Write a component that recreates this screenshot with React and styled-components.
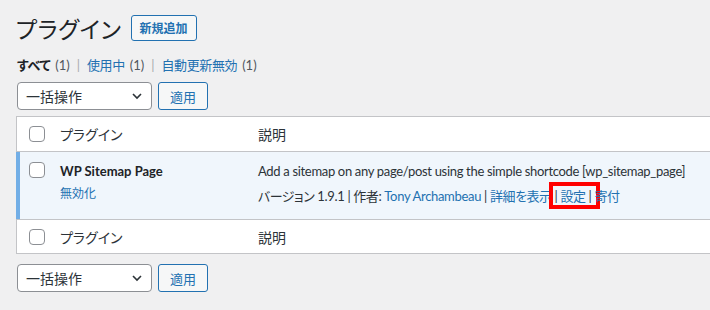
import React from "react";
import styled, { createGlobalStyle } from "styled-components";

const Global = createGlobalStyle`
  html, body { margin: 0; padding: 0; background: #f0f0f1; overflow: hidden; }
  body {
    font-family: Lato, "Noto Sans CJK JP", sans-serif;
    font-size: 13px;
    color: #1d2327;
    width: 710px;
    height: 310px;
    font-feature-settings: "palt";
  }
`;

const Wrap = styled.div`
  padding: 8px 0 0 16px;
  width: 740px;
`;

const TitleBar = styled.div`
  display: flex;
  align-items: center;
  gap: 9px;
`;

const Title = styled.h1`
  margin: 0;
  font-size: 23px;
  font-weight: 400;
  line-height: 40px;
  font-family: "Noto Sans CJK JP", sans-serif;
  letter-spacing: 0.6px;
`;

const OutlineButton = styled.button`
  font-family: "Noto Sans CJK JP", sans-serif;
  font-size: ${(p) => p.$fs || 13}px;
  font-weight: ${(p) => (p.$bold ? 600 : 400)};
  color: #2271b1;
  background: #f6f7f7;
  border: 1px solid #2271b1;
  border-radius: 3px;
  height: ${(p) => p.$h || 28}px;
  padding: 0 ${(p) => p.$px || 10}px;
  line-height: 1;
  display: inline-flex;
  align-items: center;
`;

const Filters = styled.ul`
  list-style: none;
  margin: 7px 0 0 1px;
  padding: 0;
  display: flex;
  align-items: center;
  font-family: Lato, "Noto Sans CJK JP", sans-serif;
  font-size: 13px;
  line-height: 20px;
  color: #50575e;
`;

const FilterItem = styled.li`
  display: inline-flex;
  align-items: center;
  color: ${(p) => (p.$current ? "#1d2327" : "#2271b1")};
  font-weight: ${(p) => (p.$current ? 700 : 400)};
  letter-spacing: -0.4px;
`;

const Count = styled.span`
  color: #50575e;
  font-weight: 400;
  margin-left: 5px;
  font-size: 13px;
  letter-spacing: 0;
`;

const Sep = styled.span`
  color: #a7aaad;
  margin: 0 7px;
  font-weight: 400;
`;

const Actions = styled.div`
  display: flex;
  gap: 6px;
  margin: ${(p) => p.$m || "0"};
  padding-left: 1px;
`;

const Select = styled.div`
  width: 135px;
  height: 28px;
  box-sizing: border-box;
  border: 1px solid #8c8f94;
  border-radius: 4px;
  background: #fff;
  display: flex;
  align-items: center;
  justify-content: space-between;
  padding: 0 8px 0 8px;
  font-family: "Noto Sans CJK JP", sans-serif;
  font-size: 14px;
  color: #2c3338;
`;

const Table = styled.div`
  margin-top: 6px;
  background: #fff;
  border: 1px solid #c3c4c7;
`;

const Row = styled.div`
  display: grid;
  grid-template-columns: 43px 198px 1fr;
  align-items: ${(p) => (p.$head ? "center" : "start")};
  min-height: ${(p) => p.$h}px;
  box-sizing: border-box;
  border-top: ${(p) => (p.$first ? "none" : "1px solid #c3c4c7")};
  background: ${(p) => (p.$active ? "#f0f6fc" : "#fff")};
  box-shadow: ${(p) => (p.$active ? "inset 4px 0 0 #72aee6" : "none")};
  margin-left: ${(p) => (p.$active ? "-1px" : "0")};
  padding-left: ${(p) => (p.$active ? "1px" : "0")};
`;

const Check = styled.span`
  display: block;
  width: 16px;
  height: 16px;
  box-sizing: border-box;
  border: 1px solid #8c8f94;
  border-radius: 4px;
  background: #fff;
  margin-left: 12px;
  margin-top: ${(p) => p.$mt || 0}px;
`;

const HeadCell = styled.div`
  font-family: "Noto Sans CJK JP", sans-serif;
  font-size: 14px;
  color: #2c3338;
`;

const NameCell = styled.div`
  padding-top: 9px;
  display: flex;
  flex-direction: column;
  gap: 3px;
`;

const PluginName = styled.strong`
  font-family: Lato, "Noto Sans CJK JP", sans-serif;
  font-size: 13px;
  font-weight: 700;
  line-height: 20px;
`;

const Link = styled.a`
  color: #2271b1;
  text-decoration: none;
  position: relative;
`;

const SmallLink = styled(Link)`
  font-family: "Noto Sans CJK JP", sans-serif;
  font-size: 12px;
  line-height: 18px;
`;

const DescCell = styled.div`
  padding-top: 9px;
  display: flex;
  flex-direction: column;
  gap: 5px;
  font-family: Lato, "Noto Sans CJK JP", sans-serif;
  font-size: 13px;
  line-height: 20px;
  color: #2c3338;
  letter-spacing: -0.32px;
`;

const Meta = styled.div`
  white-space: nowrap;
`;

const Ja = styled.span`
  letter-spacing: -0.5px;
`;

const Marked = styled.span`
  position: relative;
  &::after {
    content: "";
    position: absolute;
    left: -12px;
    right: -14px;
    top: -6px;
    bottom: -5px;
    border: 4px solid #ff0000;
  }
`;

const Chevron = () => (
  <svg width="12" height="12" viewBox="0 0 12 12">
    <path d="M2 4 L6 8 L10 4" fill="none" stroke="#2c3338" strokeWidth="1.6" />
  </svg>
);

const BulkActions = ({ m }) => (
  <Actions $m={m}>
    <Select>
      一括操作
      <Chevron />
    </Select>
    <OutlineButton $px={11}>適用</OutlineButton>
  </Actions>
);

export default function App() {
  return (
    <>
      <Global />
      <Wrap>
        <TitleBar>
          <Title>プラグイン</Title>
          <OutlineButton $bold $h={26} $px={8} $fs={12}>新規追加</OutlineButton>
        </TitleBar>
        <Filters>
          <FilterItem $current>
            すべて<Count>(1)</Count>
          </FilterItem>
          <Sep>|</Sep>
          <FilterItem>
            使用中<Count>(1)</Count>
          </FilterItem>
          <Sep>|</Sep>
          <FilterItem>
            自動更新無効<Count>(1)</Count>
          </FilterItem>
        </Filters>
        <BulkActions m="7px 0 0 0" />
        <Table>
          <Row $head $first $h={34}>
            <Check />
            <HeadCell>プラグイン</HeadCell>
            <HeadCell>説明</HeadCell>
          </Row>
          <Row $active $h={68}>
            <Check $mt={10} />
            <NameCell>
              <PluginName>WP Sitemap Page</PluginName>
              <SmallLink>無効化</SmallLink>
            </NameCell>
            <DescCell>
              <div>Add a sitemap on any page/post using the simple shortcode [wp_sitemap_page]</div>
              <Meta>
                <Ja>バージョン</Ja> 1.9.1 | <Ja>作者</Ja>: <Link>Tony Archambeau</Link> |{" "}
                <Link><Ja>詳細を表示</Ja></Link> |{" "}
                <Marked>
                  <Link><Ja>設定</Ja></Link>
                </Marked>{" "}
                | <Link><Ja>寄付</Ja></Link>
              </Meta>
            </DescCell>
          </Row>
          <Row $head $h={34}>
            <Check />
            <HeadCell>プラグイン</HeadCell>
            <HeadCell>説明</HeadCell>
          </Row>
        </Table>
        <BulkActions m="10px 0 0 0" />
      </Wrap>
    </>
  );
}
